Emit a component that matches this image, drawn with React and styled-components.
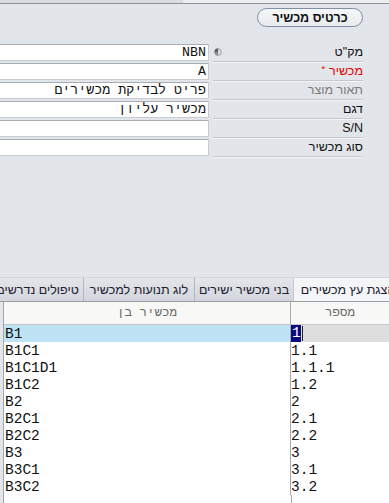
import React from 'react'
import styled, { createGlobalStyle } from 'styled-components'

const fields = [
  { label: 'מק"ט', value: 'NBN', spinner: true },
  { label: 'מכשיר', value: 'A', required: true },
  { label: 'תאור מוצר', value: 'פריט לבדיקת מכשירים', muted: true },
  { label: 'דגם', value: 'מכשיר עליון' },
  { label: 'S/N', value: '' },
  { label: 'סוג מכשיר', value: '' },
]

const tabs = [
  { title: 'הצגת עץ מכשירים', width: 109, active: true },
  { title: 'בני מכשיר ישירים', width: 99 },
  { title: 'לוג תנועות למכשיר', width: 111 },
  { title: 'טיפולים נדרשים', width: 92 },
]

const rows = [
  ['B1', '1'],
  ['B1C1', '1.1'],
  ['B1C1D1', '1.1.1'],
  ['B1C2', '1.2'],
  ['B2', '2'],
  ['B2C1', '2.1'],
  ['B2C2', '2.2'],
  ['B3', '3'],
  ['B3C1', '3.1'],
  ['B3C2', '3.2'],
]

function Spinner() {
  return (
    <svg width="8" height="8" viewBox="0 0 8 8">
      <circle cx="4" cy="4" r="3.5" fill="#d4d6d9" stroke="#9a9ea4" strokeWidth="0.8" />
      <path d="M4 4 L4 0.6 A3.4 3.4 0 0 0 0.6 4 Z" fill="#5c6066" />
      <path d="M4 4 L0.6 4 A3.4 3.4 0 0 0 4 7.4 Z" fill="#8a8e94" />
    </svg>
  )
}

export default function App() {
  return (
    <Page>
      <GlobalStyle />
      <TopStrip />
      <Header>
        <CardButton>כרטיס מכשיר</CardButton>
      </Header>

      <Form>
        {fields.map(f => (
          <FieldRow key={f.label}>
            <Input dir="rtl">{f.value}</Input>
            <LabelCell>
              <Label required={f.required} muted={f.muted}>
                {f.label}
                {f.required && <Star>*</Star>}
              </Label>
              {f.spinner && <Spinner />}
            </LabelCell>
          </FieldRow>
        ))}
      </Form>

      <Spacer />

      <TabStrip>
        {tabs.map(t => (
          <Tab key={t.title} active={t.active} style={{ width: t.width }}>
            {t.title}
          </Tab>
        ))}
      </TabStrip>

      <Grid>
        <GridHeader>
          <HeadCell wide>מכשיר בן</HeadCell>
          <HeadCell>מספר</HeadCell>
        </GridHeader>
        {rows.map(([name, num], i) => (
          <GridRow key={name}>
            <Cell wide selected={i === 0}>{name}</Cell>
            <Cell current={i === 0}>
              {i === 0 ? (
                <>
                  <Selection>{num}</Selection>
                  <Caret />
                </>
              ) : (
                num
              )}
            </Cell>
          </GridRow>
        ))}
        <GridFill>
          <FillCol wide />
          <FillCol />
        </GridFill>
      </Grid>
    </Page>
  )
}

const GlobalStyle = createGlobalStyle`
  html, body {
    margin: 0;
    padding: 0;
    background: #e2e5e9;
    overflow: hidden;
  }
`

const Page = styled.div`
  width: 389px;
  height: 503px;
  display: flex;
  flex-direction: column;
  overflow: hidden;
  font-family: 'Liberation Sans', Arial, sans-serif;
  background: #e2e5e9;
`

const TopStrip = styled.div`
  height: 3px;
  flex-shrink: 0;
  background: linear-gradient(90deg, #d8dbdf 0%, #d8dbdf 47%, #eceef0 47%);
  border-bottom: 1px solid #8e9298;
`

const Header = styled.div`
  display: flex;
  justify-content: flex-end;
  padding: 4px 26px 0 0;
  flex-shrink: 0;
`

const CardButton = styled.div`
  width: 104px;
  height: 17px;
  border: 1px solid #7d90a6;
  border-radius: 10px;
  background: linear-gradient(#f6f7f8, #e8eaed);
  display: flex;
  align-items: center;
  justify-content: center;
  font-size: 12.5px;
  font-weight: bold;
  color: #111;
  direction: rtl;
`

const Form = styled.div`
  margin-top: 16px;
  display: flex;
  flex-direction: column;
  flex-shrink: 0;
`

const FieldRow = styled.div`
  display: flex;
  height: 19px;
  padding-right: 26px;
`

const Input = styled.div`
  box-sizing: border-box;
  width: 210px;
  height: 17px;
  margin: 1px 0 0 -1px;
  background: #fff;
  border: 1px solid #c8cbd0;
  border-top-color: #a9adb3;
  padding-right: 2px;
  font-family: 'Liberation Mono', 'Courier New', monospace;
  font-size: 13.3px;
  line-height: 15px;
  color: #111;
  text-align: right;
  white-space: nowrap;
  overflow: hidden;
`

const LabelCell = styled.div`
  box-sizing: border-box;
  margin-left: 4px;
  flex: 1;
  height: 19px;
  display: flex;
  align-items: center;
  justify-content: space-between;
  padding-left: 1px;
  border-bottom: 1px solid #c4c7cc;
  box-shadow: 0 1px 0 #f4f5f6;
`

const Label = styled.div`
  direction: rtl;
  font-size: 12.5px;
  color: ${p => (p.required ? '#e00000' : p.muted ? '#7a7a7a' : '#111')};
  margin-left: auto;
  order: 2;
`

const Star = styled.span`
  font-size: 9px;
  vertical-align: top;
  margin-right: 4px;
`

const Spacer = styled.div`
  flex: 1;
`

const TabStrip = styled.div`
  display: flex;
  flex-direction: row-reverse;
  height: 24px;
  margin-right: -13px;
  border-bottom: 1px solid #9a9ea5;
  flex-shrink: 0;
`

const Tab = styled.div`
  box-sizing: border-box;
  flex-shrink: 0;
  height: 24px;
  display: flex;
  align-items: center;
  justify-content: center;
  direction: rtl;
  white-space: nowrap;
  font-size: 12.5px;
  color: #1d2030;
  border-left: 1px solid ${p => (p.active ? '#c6c9cf' : '#b3b7bf')};
  border-top: 1px solid ${p => (p.active ? '#d2d5da' : '#d6d8de')};
  background: ${p =>
    p.active ? '#f4f5f7' : 'linear-gradient(#e3e5ea, #d3d6dd)'};
`

const Grid = styled.div`
  height: 201px;
  flex-shrink: 0;
  margin-left: 3px;
  border-left: 1px solid #a4a7ab;
  background: #fff;
  display: flex;
  flex-direction: column;
`

const GridHeader = styled.div`
  display: flex;
  height: 22px;
  background: #f8f8f6;
  border-bottom: 1px solid #c6c6c6;
`

const HeadCell = styled.div`
  box-sizing: border-box;
  width: ${p => (p.wide ? '287px' : 'auto')};
  flex: ${p => (p.wide ? 'none' : 1)};
  display: flex;
  align-items: center;
  justify-content: center;
  direction: rtl;
  font-family: 'Liberation Mono', monospace;
  font-size: 12.5px;
  color: #6a6a6a;
  border-right: ${p => (p.wide ? '1px solid #a8a8a8' : 'none')};
`

const GridRow = styled.div`
  display: flex;
  height: 17px;
`

const Cell = styled.div`
  box-sizing: border-box;
  width: ${p => (p.wide ? '287px' : 'auto')};
  flex: ${p => (p.wide ? 'none' : 1)};
  display: flex;
  align-items: center;
  padding-left: ${p => (p.wide ? '1px' : '0')};
  font-family: 'Liberation Mono', 'Courier New', monospace;
  font-size: 14.5px;
  color: #111;
  white-space: nowrap;
  border-right: ${p => (p.wide ? '1px solid #a8a8a8' : 'none')};
  background: ${p => (p.selected ? '#bee3f5' : p.current ? '#dedede' : '#fff')};
`

const Selection = styled.span`
  display: inline-block;
  height: 17px;
  line-height: 17px;
  padding: 0 0 0 1px;
  background: #0b0b7e;
  color: #fff;
`

const Caret = styled.span`
  display: inline-block;
  width: 1px;
  height: 15px;
  margin-left: 1px;
  background: #222;
`

const GridFill = styled.div`
  flex: 1;
  display: flex;
`

const FillCol = styled.div`
  width: ${p => (p.wide ? '287px' : 'auto')};
  flex: ${p => (p.wide ? 'none' : 1)};
  border-right: ${p => (p.wide ? '1px solid #a8a8a8' : 'none')};
`
